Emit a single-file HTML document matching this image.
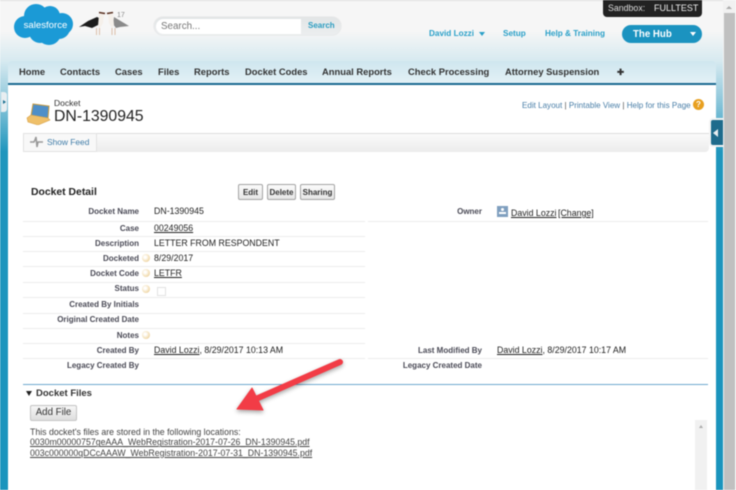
<!DOCTYPE html>
<html><head><meta charset="utf-8">
<style>
html,body{margin:0;padding:0;background:#fff}
body{width:736px;height:490px;position:relative;overflow:hidden;font-family:"Liberation Sans",Arial,sans-serif;color:#333}
.a{position:absolute;white-space:nowrap}
#w{position:absolute;left:0;top:0;width:736px;height:490px;overflow:hidden;filter:blur(.4px)}
.l{position:absolute;white-space:nowrap;right:597px;font-size:8px;font-weight:bold;color:#4a4a56;line-height:10px;margin-top:1px}
.lr{right:254px}
.v{position:absolute;white-space:nowrap;left:154px;font-size:8.8px;color:#222;line-height:11px}
.u{text-decoration:underline}
.s{position:absolute;left:23px;width:342px;height:1px;background:#ececec}
.n{position:absolute;top:66px;font-size:9.4px;font-weight:bold;color:#333;line-height:12px;white-space:nowrap}
.d{position:absolute;width:8px;height:8px;border-radius:50%;left:142px;background:radial-gradient(circle at 40% 40%,#fff 15%,#f3dfb6 60%,#dcb878)}
.b{position:absolute;top:184px;height:16px;background:linear-gradient(#fbfbfb,#e6e6e6);border:1px solid #a4a4a4;border-radius:2px;font-size:8px;font-weight:bold;color:#333;line-height:15px;text-align:center;box-sizing:border-box}
.t{color:#2aa0c8;font-size:8.2px;font-weight:bold;position:absolute;top:28px;line-height:11px;white-space:nowrap}
</style></head><body><div id="w">
<!-- header bg -->
<div class="a" style="left:0;top:0;width:723px;height:90px;background:linear-gradient(#f6f6f6 0,#f6f6f6 30px,#d5e9f0 62px,#c5e2ec 90px);border-top:1px solid #ddd;box-sizing:border-box"></div>
<!-- side stripes -->
<div class="a" style="left:0;top:62px;width:8px;height:428px;background:linear-gradient(#d5e9f0 0,#8cc6da 40px,#1f96bd 90px,#1a94bd 100%)"></div>
<div class="a" style="left:716px;top:62px;width:7px;height:428px;background:linear-gradient(#d5e9f0 0,#8cc6da 40px,#1f96bd 90px,#1a94bd 100%)"></div>
<div class="a" style="left:1px;top:92px;width:6px;height:20px;background:#e8eef1;border-radius:0 3px 3px 0"></div>
<div class="a" style="left:3px;top:100px;width:0;height:0;border-left:3px solid #1a6f90;border-top:2px solid transparent;border-bottom:2px solid transparent"></div>
<!-- scrollbar -->
<div class="a" style="left:723px;top:0;width:13px;height:490px;background:#f1f1f1"></div>
<div class="a" style="left:724px;top:13px;width:11px;height:477px;background:#c0c0c0"></div>
<div class="a" style="left:726px;top:6px;width:0;height:0;border-bottom:3px solid #aaa;border-left:3px solid transparent;border-right:3px solid transparent"></div>
<!-- content -->
<div class="a" style="left:8px;top:84px;width:708px;height:406px;background:#fff"></div>
<!-- logo -->
<svg class="a" style="left:12px;top:2px" width="66" height="46" viewBox="0 0 66 46">
<g fill="#1b9ad6"><circle cx="24" cy="14" r="12"/><circle cx="38" cy="14" r="10"/><circle cx="50" cy="22" r="11"/><circle cx="13" cy="25" r="11"/><circle cx="28" cy="30" r="11"/><circle cx="37" cy="31" r="12"/><circle cx="47" cy="26" r="11"/><rect x="14" y="14" width="38" height="18"/></g>
<text x="33.500" y="26" font-size="9.600" fill="#fff" text-anchor="middle" font-family="Liberation Sans,sans-serif">salesforce</text>
</svg>
<!-- birds -->
<svg class="a" style="left:76px;top:8px" width="60" height="32" viewBox="0 0 60 32">
<path d="M3 19 L12 13 L21 9 L23 10 L24 16 L16 20 L9 18 Z" fill="#1c1c1c"/>
<path d="M23 6 L28 6 L27 15 L24 20 L22 18 Z" fill="#f5f0ea"/>
<path d="M23 4.500 L29 5.500" stroke="#5a3020" stroke-width="1.600"/>
<path d="M38 9 L43 12 L53 18 L44 19 L40 20 L37 16 Z" fill="#8a8a8a"/>
<path d="M32 6 L37 6 L38 17 L36 20 L33 15 Z" fill="#f5f0ea"/>
<path d="M31 5.500 L37 4.500" stroke="#5a3020" stroke-width="1.600"/>
<path d="M20.500 20v7M23.500 20v7M36 20v7M39 20v7" stroke="#dcc0aa" stroke-width="1"/>
<text x="41" y="9" font-size="7" fill="#888" font-family="Liberation Sans,sans-serif">17</text>
</svg>
<!-- search -->
<div class="a" style="left:154px;top:17px;width:187px;height:18px;border-radius:9px;background:linear-gradient(#e2e5e6,#eceeef);box-shadow:0 0 1px #bbb"></div>
<div class="a" style="left:156px;top:19px;width:145px;height:15px;border-radius:8px 0 0 8px;background:#fff"></div>
<div class="a" style="left:161px;top:20px;font-size:9.800px;line-height:13px;color:#777">Search...</div>
<div class="a" style="left:308px;top:20px;font-size:8px;font-weight:bold;line-height:12px;color:#2a9cc0">Search</div>
<!-- top right -->
<div class="a" style="left:603px;top:0;width:99px;height:17px;background:#222;border-radius:0 0 4px 4px"></div>
<div class="a" style="left:608px;top:3px;font-size:8.800px;line-height:11px;color:#ddd">Sandbox:</div>
<div class="a" style="left:654px;top:3px;font-size:9px;line-height:11px;color:#eee">FULLTEST</div>
<div class="t" style="left:429px">David Lozzi</div>
<div class="a" style="left:479px;top:32px;width:0;height:0;border-top:4px solid #2aa0c8;border-left:3px solid transparent;border-right:3px solid transparent"></div>
<div class="t" style="left:503px">Setup</div>
<div class="t" style="left:545px">Help &amp; Training</div>
<div class="a" style="left:622px;top:25px;width:80px;height:18px;border-radius:9px;background:#1b93c0"></div>
<div class="a" style="left:633px;top:28px;font-size:9.700px;font-weight:bold;line-height:14px;color:#fff">The Hub</div>
<div class="a" style="left:690px;top:32px;width:0;height:0;border-top:4px solid #fff;border-left:3.500px solid transparent;border-right:3.500px solid transparent"></div>
<!-- nav -->
<div class="a" style="left:8px;top:61px;width:708px;height:24px;background:linear-gradient(#cfe6ef,#e3f1f6);border-radius:4px 4px 0 0;border-bottom:2px solid #1a6a92;box-sizing:border-box"></div>
<div class="n" style="left:19px">Home</div>
<div class="n" style="left:60px">Contacts</div>
<div class="n" style="left:115px">Cases</div>
<div class="n" style="left:158px">Files</div>
<div class="n" style="left:194px">Reports</div>
<div class="n" style="left:245px">Docket Codes</div>
<div class="n" style="left:322px">Annual Reports</div>
<div class="n" style="left:408px">Check Processing</div>
<div class="n" style="left:505px">Attorney Suspension</div>
<div class="n" style="left:617px;font-size:8.500px">✚</div>
<!-- title -->
<svg class="a" style="left:26px;top:101px" width="26" height="24" viewBox="0 0 26 24">
<path d="M7 3 L23 5 L22 17 L5 15 Z" fill="#4f8fc8" stroke="#c89a3c"/>
<path d="M1 17 L5 14 L22 17 L24 19 L12 24 L2 21 Z" fill="#efc06a" stroke="#d8a248" stroke-width=".6"/>
</svg>
<div class="a" style="left:54px;top:98px;font-size:8.500px;line-height:10px;color:#333">Docket</div>
<div class="a" style="left:54px;top:108px;font-size:15.800px;line-height:18px;color:#222">DN-1390945</div>
<div class="a" style="left:522px;top:100px;font-size:8.050px;line-height:11px;color:#4a7fa8">Edit Layout <span style="color:#555">|</span> Printable View <span style="color:#555">|</span> Help for this Page</div>
<div class="a" style="left:693px;top:99px;width:11px;height:11px;border-radius:50%;background:#e8a020;color:#fff;font-size:8px;font-weight:bold;line-height:11px;text-align:center">?</div>
<!-- side handle -->
<div class="a" style="left:709px;top:118px;width:14px;height:29px;background:#1e6b8c;border:2px solid #f4f4f4;border-right:0;border-radius:4px 0 0 4px;box-sizing:border-box"></div>
<div class="a" style="left:713px;top:129px;width:0;height:0;border-right:5px solid #e8eef1;border-top:4px solid transparent;border-bottom:4px solid transparent"></div>
<!-- feed bar -->
<div class="a" style="left:23px;top:133px;width:686px;height:19px;background:linear-gradient(#fafafa,#ececec);border-top:1px solid #ddd;border-radius:0 0 4px 4px;box-sizing:border-box"></div>
<div class="a" style="left:23px;top:133px;width:74px;height:19px;background:#f8f8f8;border:1px solid #e2e2e2;box-sizing:border-box"></div>
<svg class="a" style="left:30px;top:136px" width="13" height="12"><path d="M0 6H4L5 4 6 1 7 11 8 6H13" stroke="#999" stroke-width="1.500" fill="none"/></svg>
<div class="a" style="left:47px;top:136px;font-size:8.400px;line-height:12px;color:#3f7ca8">Show Feed</div>
<!-- detail header -->
<div class="a" style="left:31px;top:186px;font-size:10.400px;font-weight:bold;line-height:14px;color:#222">Docket Detail</div>
<div class="b" style="left:238px;width:25px">Edit</div>
<div class="b" style="left:267px;width:29px">Delete</div>
<div class="b" style="left:300px;width:35px">Sharing</div>
<!-- rows -->
<div class="l" style="top:206px">Docket Name</div><div class="v" style="top:206px">DN-1390945</div>
<div class="s" style="top:221px"></div>
<div class="l" style="top:223px">Case</div><div class="v u" style="top:223px">00249056</div>
<div class="s" style="top:236px"></div>
<div class="l" style="top:238px">Description</div><div class="v" style="top:238px">LETTER FROM RESPONDENT</div>
<div class="s" style="top:251px"></div>
<div class="l" style="top:253px">Docketed</div><div class="d" style="top:254px"></div><div class="v" style="top:253px">8/29/2017</div>
<div class="s" style="top:266px"></div>
<div class="l" style="top:268px">Docket Code</div><div class="d" style="top:269px"></div><div class="v u" style="top:268px">LETFR</div>
<div class="s" style="top:282px"></div>
<div class="l" style="top:283px">Status</div><div class="d" style="top:285px"></div>
<div class="a" style="left:157px;top:287px;width:7px;height:7px;border:1px solid #e2e2e2"></div>
<div class="s" style="top:297px"></div>
<div class="l" style="top:299px">Created By Initials</div>
<div class="s" style="top:313px"></div>
<div class="l" style="top:314px">Original Created Date</div>
<div class="s" style="top:328px"></div>
<div class="l" style="top:330px">Notes</div><div class="d" style="top:331px"></div>
<div class="s" style="top:343px"></div>
<div class="l" style="top:345px">Created By</div><div class="v" style="top:345px"><span class="u">David Lozzi</span>, 8/29/2017 10:13 AM</div>
<div class="s" style="top:358px"></div>
<div class="l" style="top:360px">Legacy Created By</div>
<!-- right col -->
<div class="l lr" style="top:206px">Owner</div>
<div class="a" style="left:497px;top:206px;width:11px;height:11px;background:#7f9fbf"></div>
<div class="a" style="left:501px;top:208px;width:3px;height:3px;background:#fff;border-radius:50%"></div>
<div class="a" style="left:499px;top:212px;width:7px;height:2px;background:#fff"></div>
<div class="v u" style="left:511px;top:208px">David Lozzi</div>
<div class="v u" style="left:558px;top:208px">[Change]</div>
<div class="a" style="left:368px;top:221px;width:340px;height:1px;background:#ececec"></div>
<div class="l lr" style="top:345px">Last Modified By</div>
<div class="v" style="left:497px;top:345px"><span class="u">David Lozzi</span>, 8/29/2017 10:17 AM</div>
<div class="a" style="left:368px;top:358px;width:340px;height:1px;background:#ececec"></div>
<div class="l lr" style="top:360px">Legacy Created Date</div>
<!-- divider -->
<div class="a" style="left:23px;top:384px;width:685px;height:1px;background:#6fa9cf"></div>
<!-- files -->
<div class="a" style="left:26px;top:391px;width:0;height:0;border-top:5px solid #222;border-left:3.500px solid transparent;border-right:3.500px solid transparent"></div>
<div class="a" style="left:36px;top:387px;font-size:9.500px;font-weight:bold;line-height:13px;color:#333">Docket Files</div>
<div class="a" style="left:30px;top:405px;width:47px;height:16px;background:linear-gradient(#f6f6f6,#dedede);border:1px solid #c4c4c4;border-radius:2px;box-sizing:border-box;font-size:9.700px;line-height:14px;text-align:center;color:#333">Add File</div>
<div class="a" style="left:30px;top:427px;font-size:8.780px;line-height:10.300px;color:#444">This docket's files are stored in the following locations:<br><span class="u">0030m00000757geAAA_WebRegistration-2017-07-26_DN-1390945.pdf</span><br><span class="u">003c000000qDCcAAAW_WebRegistration-2017-07-31_DN-1390945.pdf</span></div>
<!-- inner scrollbar -->
<div class="a" style="left:695px;top:420px;width:12px;height:70px;background:#f1f1f1"></div>
<div class="a" style="left:699px;top:425px;width:0;height:0;border-bottom:3px solid #aaa;border-left:2.500px solid transparent;border-right:2.500px solid transparent"></div>
<!-- arrow -->
<svg class="a" style="left:230px;top:350px;filter:drop-shadow(0 2px 2px rgba(0,0,0,.35))" width="120" height="70" viewBox="230 350 120 70">
<path d="M340 362 L258 398" stroke="#f23c46" stroke-width="6" stroke-linecap="round" fill="none"/>
<path d="M237 409 L252 388 L263 410 Z" fill="#f23c46" stroke="#f23c46" stroke-linejoin="round"/>
</svg>
</div></body></html>
